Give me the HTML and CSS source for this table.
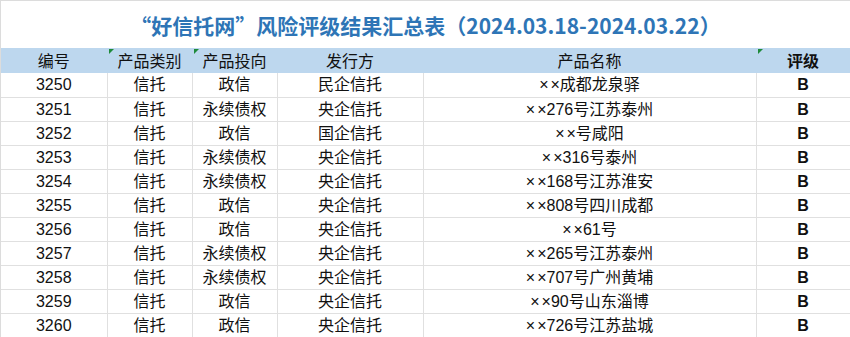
FILE: index.html
```html
<!DOCTYPE html>
<html lang="zh-CN">
<head>
    <meta charset="UTF-8">
    <meta name="viewport" content="width=device-width, initial-scale=1.0">
    <title>风险评级结果汇总表</title>
    <link rel="stylesheet" href="styles.css">
</head>
<body>
    <div class="sheet">
        <h1 class="title">“好信托网”风险评级结果汇总表（2024.03.18-2024.03.22）</h1>
        <table class="grid">
            <colgroup>
                <col class="c-id">
                <col class="c-type">
                <col class="c-dir">
                <col class="c-issuer">
                <col class="c-name">
                <col class="c-rate">
            </colgroup>
            <thead>
                <tr>
                    <th>编号</th>
                    <th class="flag">产品类别</th>
                    <th class="flag">产品投向</th>
                    <th>发行方</th>
                    <th>产品名称</th>
                    <th class="flag bold">评级</th>
                </tr>
            </thead>
            <tbody>
                <tr><td>3250</td><td>信托</td><td>政信</td><td>民企信托</td><td><span class="xx">×</span>×成都龙泉驿</td><td class="bold">B</td></tr>
                <tr><td>3251</td><td>信托</td><td>永续债权</td><td>央企信托</td><td><span class="xx">×</span>×276号江苏泰州</td><td class="bold">B</td></tr>
                <tr><td>3252</td><td>信托</td><td>政信</td><td>国企信托</td><td><span class="xx">×</span>×号咸阳</td><td class="bold">B</td></tr>
                <tr><td>3253</td><td>信托</td><td>永续债权</td><td>央企信托</td><td><span class="xx">×</span>×316号泰州</td><td class="bold">B</td></tr>
                <tr><td>3254</td><td>信托</td><td>永续债权</td><td>央企信托</td><td><span class="xx">×</span>×168号江苏淮安</td><td class="bold">B</td></tr>
                <tr><td>3255</td><td>信托</td><td>政信</td><td>央企信托</td><td><span class="xx">×</span>×808号四川成都</td><td class="bold">B</td></tr>
                <tr><td>3256</td><td>信托</td><td>政信</td><td>央企信托</td><td><span class="xx">×</span>×61号</td><td class="bold">B</td></tr>
                <tr><td>3257</td><td>信托</td><td>永续债权</td><td>央企信托</td><td><span class="xx">×</span>×265号江苏泰州</td><td class="bold">B</td></tr>
                <tr><td>3258</td><td>信托</td><td>永续债权</td><td>央企信托</td><td><span class="xx">×</span>×707号广州黄埔</td><td class="bold">B</td></tr>
                <tr><td>3259</td><td>信托</td><td>政信</td><td>央企信托</td><td><span class="xx">×</span>×90号山东淄博</td><td class="bold">B</td></tr>
                <tr><td>3260</td><td>信托</td><td>政信</td><td>央企信托</td><td><span class="xx">×</span>×726号江苏盐城</td><td class="bold">B</td></tr>
            </tbody>
        </table>
    </div>
</body>
</html>
```

FILE: styles.css
```css
* {
    margin: 0;
    padding: 0;
    box-sizing: border-box;
}

body {
    font-family: "Liberation Sans", "Noto Sans CJK SC", sans-serif;
    background: #fff;
    color: #111;
}

.sheet {
    width: 850px;
    height: 337px;
    overflow: hidden;
    border-top: 1px solid #dcdcdc;
    border-left: 1px solid #dcdcdc;
}

.title {
    height: 47px;
    display: flex;
    align-items: center;
    justify-content: center;
    font-family: "Noto Sans CJK SC", sans-serif;
    font-size: 21px;
    font-weight: bold;
    color: #2e75b6;
}

.grid {
    width: 849px;
    border-collapse: collapse;
    table-layout: fixed;
    font-size: 16px;
}

.c-id { width: 106px; }
.c-type { width: 85px; }
.c-dir { width: 85px; }
.c-issuer { width: 146px; }
.c-name { width: 333px; }
.c-rate { width: 94px; }

th {
    height: 25px;
    background: #bdd7ee;
    font-weight: normal;
    font-family: "Noto Sans CJK SC", sans-serif;
    position: relative;
    line-height: 25px;
    border-right: 1px solid #bdd7ee;
}

td {
    height: 24px;
    text-align: center;
    line-height: 23px;
    border-right: 1px solid #e0e0e0;
    border-bottom: 1px solid #e0e0e0;
    white-space: nowrap;
}

/* the two crosses sit apart in the source sheet */
.xx {
    letter-spacing: 2px;
}

th.flag::before {
    content: "";
    position: absolute;
    left: 1px;
    top: 1px;
    border-top: 5px solid #1e8a3a;
    border-right: 5px solid transparent;
}

.bold {
    font-weight: bold;
}
```
